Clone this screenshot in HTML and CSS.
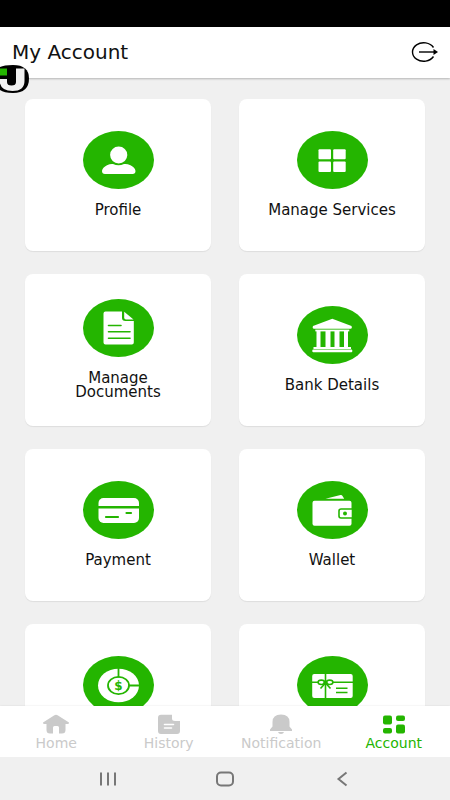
FILE: index.html
```html
<!DOCTYPE html>
<html lang="en">

<head>
    <meta charset="UTF-8">
    <meta name="viewport" content="width=device-width, initial-scale=1.0">
    <title>My Account</title>
    <link rel="stylesheet" href="styles.css">
</head>

<body>
    <div class="status-bar"></div>

    <header class="header">
        <h1>My Account</h1>
        <button class="logout" type="button" aria-label="Log out">
            <svg width="28" height="22" viewBox="0 0 28 22">
                <path d="M23.5 6.5A11.2 9.3 0 1 0 23.5 15.5" fill="none" stroke="#000" stroke-width="1.4" />
                <path d="M9 11H24" stroke="#000" stroke-width="1.4" />
                <path d="M23.5 8L28 11L23.5 14Z" />
            </svg>
        </button>
        <!-- floating logo, half off the left edge -->
        <svg class="logo" width="30" height="30" viewBox="0 0 30 30">
            <path d="M0 2Q4 0 13 0Q29 0 29 13.5Q29 28 13 28Q4 28 0 25Z" />
            <path d="M0 14H7V17Q7 20.500 11.500 20.500Q16 20.500 16 17V3.500H24.500V16Q24.500 26 12.500 26Q2 26 0 18.500Z" fill="#f0f0f0" />
            <path d="M0 3.500H7V10.500H0Z" fill="#24b500" />
        </svg>
    </header>

    <main class="content">
        <div class="cards">
            <a class="card" href="#">
                <svg class="icon" viewBox="0 0 71 58">
                    <ellipse cx="35.5" cy="29" rx="35.5" ry="29" fill="#24b500" />
                    <path d="M19 40Q19.500 36.500 24 34.300Q27.500 32.500 30 33Q35.500 35.500 41 33Q44 32.500 47.500 34.300Q52 36.500 52.500 40Q52.500 43 49.500 43H22Q19 43 19 40Z" fill="#fff" />
                    <ellipse cx="35.7" cy="24" rx="8.6" ry="8.4" fill="#fff" />
                </svg>
                <span class="label">Profile</span>
            </a>

            <a class="card" href="#">
                <svg class="icon" viewBox="0 0 71 58">
                    <ellipse cx="35.5" cy="29" rx="35.5" ry="29" fill="#24b500" />
                    <g fill="#fff">
                        <rect x="21.5" y="18.3" width="12.5" height="10" rx="1" />
                        <rect x="36.2" y="18.3" width="12.5" height="10" rx="1" />
                        <rect x="21.5" y="30.6" width="12.5" height="10.4" rx="1" />
                        <rect x="36.2" y="30.6" width="12.5" height="10.4" rx="1" />
                    </g>
                </svg>
                <span class="label">Manage Services</span>
            </a>

            <a class="card" href="#">
                <svg class="icon" viewBox="0 0 71 58">
                    <ellipse cx="35.5" cy="29" rx="35.5" ry="29" fill="#24b500" />
                    <path d="M22.5 12.500H39V19Q39 22 42.500 22H50.800V43.500Q50.800 45.500 48.800 45.500H22.500Q20.500 45.500 20.500 43.500V14.500Q20.500 12.500 22.500 12.500Z" fill="#fff" />
                    <path d="M41.200 12.800L50.500 20.500H43Q41.200 20.500 41.200 18.800Z" fill="#fff" />
                    <path d="M25.500 26.500H38M25.500 32.800H47M25.500 39.200H47" stroke="#24b500" stroke-width="1.6" stroke-linecap="round" />
                </svg>
                <span class="label">Manage Documents</span>
            </a>

            <a class="card" href="#">
                <svg class="icon" viewBox="0 0 71 58">
                    <ellipse cx="35.5" cy="29" rx="35.5" ry="29" fill="#24b500" />
                    <g fill="#fff">
                        <path d="M35.300 12.800L54.500 20Q55.500 22.800 53.500 22.800H17Q15 22.800 16 20Z" />
                        <rect x="18.3" y="23.6" width="34" height="1.8" />
                        <rect x="19.5" y="25" width="4" height="17" />
                        <rect x="28.5" y="25" width="5" height="17" />
                        <rect x="37.5" y="25" width="5" height="17" />
                        <rect x="47" y="25" width="4" height="17" />
                        <rect x="16.5" y="41" width="37.5" height="2" />
                        <rect x="15.3" y="43.6" width="40" height="2.6" rx="1" />
                    </g>
                </svg>
                <span class="label">Bank Details</span>
            </a>

            <a class="card" href="#">
                <svg class="icon" viewBox="0 0 71 58">
                    <ellipse cx="35.5" cy="29" rx="35.5" ry="29" fill="#24b500" />
                    <rect x="15.5" y="17" width="40.5" height="25" rx="5" fill="#fff" />
                    <path d="M15 26.200H57" stroke="#24b500" stroke-width="2.4" />
                    <path d="M23 36H35M43.500 32H48" stroke="#24b500" stroke-width="2.2" stroke-linecap="round" />
                </svg>
                <span class="label">Payment</span>
            </a>

            <a class="card" href="#">
                <svg class="icon" viewBox="0 0 71 58">
                    <ellipse cx="35.5" cy="29" rx="35.5" ry="29" fill="#24b500" />
                    <path d="M28.500 17.800L43.500 14Q45 13.800 45.500 15L47.200 17.800Z" fill="#fff" />
                    <rect x="15.5" y="19.8" width="39" height="25" rx="2" fill="#fff" />
                    <path d="M55.500 28H44Q42 28 42 30V35Q42 37 44 37H55.500Z" fill="#fff" stroke="#24b500" stroke-width="1.6" />
                    <circle cx="48" cy="32.4" r="2" fill="#24b500" />
                </svg>
                <span class="label">Wallet</span>
            </a>

            <a class="card" href="#">
                <svg class="icon" viewBox="0 0 71 58">
                    <ellipse cx="35.5" cy="29" rx="35.5" ry="29" fill="#24b500" />
                    <ellipse cx="35.5" cy="29.5" rx="20.5" ry="16.8" fill="#fff" />
                    <path d="M35.500 11V21.500M46 29.500H57" stroke="#24b500" stroke-width="1.8" />
                    <ellipse cx="35.5" cy="29.5" rx="10.5" ry="8.7" fill="none" stroke="#24b500" stroke-width="1.8" />
                    <text class="coin" x="35.5" y="34" text-anchor="middle">$</text>
                </svg>
                <span class="label"></span>
            </a>

            <a class="card" href="#">
                <svg class="icon" viewBox="0 0 71 58">
                    <ellipse cx="35.5" cy="29" rx="35.5" ry="29" fill="#24b500" />
                    <rect x="15.2" y="18" width="40.5" height="24" rx="2" fill="#fff" />
                    <g fill="none" stroke="#24b500" stroke-width="1.6">
                        <path d="M28.500 18V42M15 26.300H56" />
                        <ellipse cx="24.3" cy="26.3" rx="3.2" ry="2.2" fill="#fff" />
                        <ellipse cx="32.7" cy="26.3" rx="3.2" ry="2.2" fill="#fff" />
                        <path d="M28.500 27L23.500 32.500M28.500 27L33.500 32.500" />
                        <path d="M39 32.300H50.500M39 36.500H50.500" />
                    </g>
                    <circle cx="28.5" cy="26.5" r="2" fill="#24b500" />
                </svg>
                <span class="label"></span>
            </a>
        </div>
    </main>

    <nav class="tabs">
        <a class="tab" href="#">
            <svg width="28" height="20" viewBox="0 0 28 20" fill="currentColor">
                <path d="M14 .8Q15 .8 16 1.500L27 8.500L26.500 10H23.500V16Q23.500 19.500 20 19.500H17V13.500Q17 12 15.500 12H12.500Q11 12 11 13.500V19.500H8Q4.500 19.500 4.500 16V10H1.500L1 8.500L12 1.500Q13 .8 14 .8Z" />
            </svg>
            <span>Home</span>
        </a>
        <a class="tab" href="#">
            <svg width="28" height="20" viewBox="0 0 28 20">
                <path d="M6 .8H17V4.500Q17 7 20 7H25V17Q25 20 22 20H6Q3 20 3 17V3.800Q3 .8 6 .8Z" fill="currentColor" />
                <path d="M9.500 10.500H18.500M9.500 14H16.500" stroke="#fff" stroke-width="1.6" stroke-linecap="round" />
            </svg>
            <span>History</span>
        </a>
        <a class="tab" href="#">
            <svg width="28" height="20" viewBox="0 0 28 20" fill="currentColor">
                <path d="M14 .5Q22.500 .5 22.500 8V12.500L25 15.500V17H3V15.500L5.500 12.500V8Q5.500 .5 14 .5Z" />
                <path d="M11 18H17Q16.500 20 14 20Q11.500 20 11 18Z" />
            </svg>
            <span>Notification</span>
        </a>
        <a class="tab active" href="#">
            <svg width="28" height="20" viewBox="0 0 28 20" fill="currentColor">
                <rect x="3" y="1.5" width="9" height="9" rx="2" />
                <rect x="16" y="1.5" width="9" height="5.5" rx="2" />
                <rect x="3" y="14" width="9" height="5.5" rx="2" />
                <rect x="16" y="10.5" width="9" height="9" rx="2" />
            </svg>
            <span>Account</span>
        </a>
    </nav>

    <div class="system-nav">
        <button type="button" aria-label="Recent apps">
            <svg width="20" height="16" viewBox="0 0 20 16">
                <path d="M3 1.500V14.500M10 1.500V14.500M17 1.500V14.500" />
            </svg>
        </button>
        <button type="button" aria-label="Home screen">
            <svg width="20" height="16" viewBox="0 0 20 16">
                <rect x="2" y="1.5" width="16" height="13" rx="4" />
            </svg>
        </button>
        <button type="button" aria-label="Back">
            <svg width="20" height="16" viewBox="0 0 20 16">
                <path d="M14.500 1.500L6.500 8L14.500 14.500" />
            </svg>
        </button>
    </div>
</body>

</html>
```

FILE: styles.css
```css
* {
    box-sizing: border-box;
}

body {
    margin: 0;
    height: 100vh;
    display: flex;
    flex-direction: column;
    background-color: #f0f0f0;
    color: #111;
    font-family: "DejaVu Sans", sans-serif;
}

a {
    color: inherit;
    text-decoration: none;
}

button {
    display: flex;
    padding: 0;
    border: none;
    background: none;
}

.status-bar {
    flex: none;
    height: 27px;
    background-color: #000;
}

.header {
    position: relative;
    z-index: 1;
    flex: none;
    display: flex;
    justify-content: space-between;
    align-items: center;
    height: 51px;
    padding: 0 12px 2px;
    background-color: #fff;
    box-shadow: 0 1px 2px rgba(0, 0, 0, 0.25);
}

.header h1 {
    margin: 0;
    font-size: 20px;
    line-height: 24px;
    font-weight: normal;
}

.logo {
    position: absolute;
    left: 0;
    top: 38px;
}

.content {
    flex: 1;
    min-height: 0;
    overflow-y: auto;
    scrollbar-width: none;
}

.cards {
    display: grid;
    grid-template-columns: 1fr 1fr;
    gap: 23px 28px;
    padding: 21px 25px;
}

.card {
    display: flex;
    flex-direction: column;
    justify-content: center;
    align-items: center;
    gap: 14px;
    min-height: 152px;
    padding: 0 20px 2px;
    border-radius: 8px;
    background-color: #fff;
    box-shadow: 0 1px 1px rgba(0, 0, 0, 0.08);
}

.icon {
    width: 71px;
    height: 58px;
}

.label {
    min-height: 14px;
    font-size: 15px;
    line-height: 14px;
    text-align: center;
}

.coin {
    fill: #24b500;
    font-size: 12px;
    font-weight: bold;
}

.tabs {
    z-index: 1;
    flex: none;
    display: flex;
    height: 51px;
    padding-top: 8px;
    background-color: #fff;
    box-shadow: 0 0 2px rgba(0, 0, 0, 0.1);
}

.tab {
    flex: 1;
    display: flex;
    flex-direction: column;
    align-items: center;
    gap: 2px;
    color: #cacaca;
    font-size: 14px;
    line-height: 14px;
}

.tab.active {
    color: #24b500;
}

.system-nav {
    z-index: 1;
    flex: none;
    display: flex;
    justify-content: space-around;
    align-items: center;
    height: 43px;
    padding: 0 50px;
    background-color: #f0f0f0;
}

.system-nav svg {
    fill: none;
    stroke: #777;
    stroke-width: 2;
}
```
